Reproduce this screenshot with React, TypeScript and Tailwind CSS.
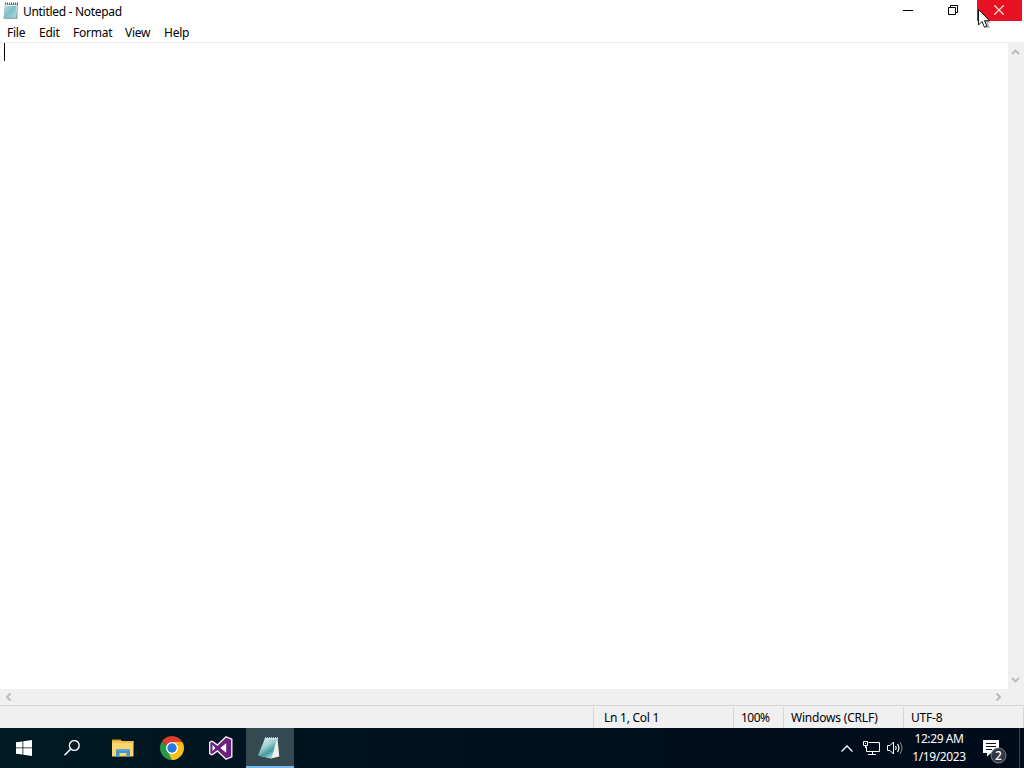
import clsx from 'clsx';

interface IconProps {
  className?: string;
}

const MENUS = [
  { label: 'File', width: 'w-[32px]' },
  { label: 'Edit', width: 'w-[34px]' },
  { label: 'Format', width: 'w-[52px]' },
  { label: 'View', width: 'w-[39px]' },
  { label: 'Help', width: 'w-[40px]' },
];

const STATUS = [
  { label: 'Ln 1, Col 1', className: 'w-[140px] pl-[10px] tracking-[-0.25px]' },
  { label: '100%', className: 'w-[50px] pl-[7px] tracking-[-0.55px]' },
  { label: 'Windows (CRLF)', className: 'w-[120px] pl-[7px] tracking-[-0.2px]' },
  { label: 'UTF-8', className: 'w-[120px] pl-[7px] tracking-[-0.2px]' },
];

const Chevron = ({ className }: IconProps) => (
  <svg viewBox="0 0 9 6" className={clsx('w-[9px] h-[6px]', className)}>
    <path d="M1 5L4.500 1.500L8 5" fill="none" stroke="currentColor" strokeWidth="1.800" />
  </svg>
);

const NotepadSmall = () => (
  <svg viewBox="0 0 16 18" className="w-[16px] h-[18px]">
    <defs>
      <linearGradient id="pageSmall" x1="0" y1="0" x2="1" y2="1">
        <stop offset="0" stopColor="#c5e6e8" />
        <stop offset="0.5" stopColor="#80c0c4" />
        <stop offset="1" stopColor="#a9dcdd" />
      </linearGradient>
    </defs>
    <path d="M2 2L14.800 2L14.300 16.800L0.600 16.800Z" fill="#6d9598" />
    <path d="M2 2.500L13.500 2.500L12.300 15.800L0.600 15.800Z" fill="url(#pageSmall)" />
    <path d="M13.700 3L12.800 15.500" stroke="#e1eeee" strokeWidth="0.800" />
    <path d="M2 1.500H15" stroke="#4c5b5c" strokeWidth="2" strokeDasharray="1 1" />
    <path d="M2 3.500H14" stroke="#e8f2f2" strokeWidth="1" />
  </svg>
);

const WindowsLogo = () => (
  <svg viewBox="0 0 16 16" className="w-[16px] h-[16px]" fill="#fff">
    <path d="M0 2.300L6.500 1.400V7.500H0ZM7.300 1.300L16 0V7.500H7.300ZM0 8.300H6.500V14.600L0 13.700ZM7.300 8.300H16V16L7.300 14.700Z" />
  </svg>
);

const SearchIcon = () => (
  <svg viewBox="0 0 16 16" className="w-[16px] h-[16px]" fill="none" stroke="#fff">
    <circle cx="10.300" cy="5.500" r="4.900" strokeWidth="1.400" />
    <path d="M6.800 9L0.500 15.300" strokeWidth="1.500" />
  </svg>
);

const FolderIcon = () => (
  <svg viewBox="0 0 22 19" className="w-[22px] h-[19px]">
    <path d="M0 1H8L10 2H21.500V17.500H0Z" fill="#fbd570" />
    <path d="M0 0.500H8.500L9.500 2.200H0Z" fill="#d99d24" />
    <path d="M1 3H9L10 2H21.500V4H1Z" fill="#f2bd45" />
    <path d="M4 18V11.500Q4 10 5.500 10H16.500Q18 10 18 11.500V18H14.500V14H7.500V18Z" fill="#4596cd" />
    <path d="M5 10.300H17L16 12H6Z" fill="#61a5d2" />
  </svg>
);

const ChromeIcon = () => (
  <svg viewBox="0 0 24 24" className="w-[24px] h-[24px]">
    <path d="M12 12L1.610 6A12 12 0 0 1 22.390 6Z" fill="#e33b2e" />
    <path d="M12 12L22.390 6A12 12 0 0 1 12 24Z" fill="#fbc116" />
    <path d="M12 12V24A12 12 0 0 1 1.610 6Z" fill="#279847" />
    <path d="M17.200 15L12 24L9 18L12 12L22.390 6H12L18 9Z" fill="#fbc116" />
    <path d="M1.610 6L6.800 15L9 12Z" fill="#279847" />
    <circle cx="12" cy="12" r="6" fill="#fff" />
    <circle cx="12" cy="12" r="4.700" fill="#2b76e5" />
  </svg>
);

const VisualStudioIcon = () => (
  <svg viewBox="0 0 24 24" className="w-[24px] h-[24px]">
    <path
      d="M17 0.800L22.800 3.200V20.800L17 23.200L8.500 14.900L3.200 18.800L0.700 17.600V6.400L3.200 5.200L8.500 9.100Z"
      fill="#68217a"
      stroke="#f3edf5"
      strokeWidth="1.400"
      strokeLinejoin="round"
    />
    <path d="M3.500 8.800L6.300 12L3.500 15.200ZM11.300 12L17.200 7.300V16.700Z" fill="#fff" />
  </svg>
);

const NotepadIcon = () => (
  <svg viewBox="0 0 24 24" className="w-[24px] h-[24px]">
    <defs>
      <linearGradient id="pageLarge" x1="0" y1="0" x2="0.6" y2="1">
        <stop offset="0" stopColor="#dff2f1" />
        <stop offset="0.45" stopColor="#a5d2d3" />
        <stop offset="0.75" stopColor="#419aa0" />
        <stop offset="1" stopColor="#a2d6d5" />
      </linearGradient>
    </defs>
    <path d="M8 2L20.500 2L22.300 20.500L14 22.500L3 20Z" fill="#d1d9d9" />
    <path d="M20 3L22 20.200L14.500 22Z" fill="#efeeea" />
    <path d="M8 2.500L19.800 2.800L14.500 22.500L1 19.500Z" fill="url(#pageLarge)" />
    <path d="M8 2.300H21" stroke="#e0e6e6" strokeWidth="2" strokeDasharray="1 1" />
  </svg>
);

const NetworkIcon = () => (
  <svg viewBox="0 0 17 15" className="w-[17px] h-[15px]" fill="none" stroke="#fff">
    <path d="M5.500 1.500H16.500V10.500H3.500V5.500M9.500 10.500V13.500M5 13.500H13" />
    <path d="M0.500 0.500H4.500V4.500H0.500ZM2 2.500H3M2.500 4.500V7" />
  </svg>
);

const VolumeIcon = () => (
  <svg viewBox="0 0 17 14" className="w-[17px] h-[14px]" fill="none" stroke="#fff">
    <path d="M0.500 4.500H3L6.500 1V13L3 9.500H0.500Z" />
    <path d="M8.500 5Q10 7 8.500 9M10.500 3Q13.300 7 10.500 11" strokeWidth="1.200" />
    <path d="M12.800 1.300Q17.300 7 12.800 12.700" stroke="#8b929a" />
  </svg>
);

const ActionCenter = () => (
  <div className="relative w-[24px] h-[24px] mt-[7px]">
    <svg viewBox="0 0 24 24" className="w-full h-full">
      <path d="M0 0H16V13H8L4 16.500V13H0Z" fill="#fff" />
      <path d="M3 3.500H13M3 6.500H13M3 9.500H9" stroke="#08121d" />
      <circle cx="15.500" cy="15.500" r="7.500" fill="#313944" stroke="#7b828a" />
    </svg>
    <span className="absolute left-[8px] top-[8px] w-[15px] text-center text-[12px] font-medium leading-[15px] text-white">
      2
    </span>
  </div>
);

const TitleBar = () => (
  <header className="h-[23px] shrink-0 flex items-start">
    <div className="w-[23px] pl-[3px] pt-[2px]">
      <NotepadSmall />
    </div>
    <h1 className="flex-1 pt-[3px] leading-[18px] tracking-[-0.3px]">Untitled - Notepad</h1>
    <div className="w-[45px] h-[21px] pr-[2px] flex items-center justify-center">
      <div className="w-[10px] h-px bg-black" />
    </div>
    <div className="w-[46px] h-[20px] pr-[2px] flex items-center justify-center">
      <svg viewBox="0 0 10 10" className="w-[10px] h-[10px]" fill="none" stroke="#000">
        <path d="M0.500 2.500H7.500V9.500H0.500ZM2.500 2V0.500H9.500V7.500H8" />
      </svg>
    </div>
    <div className="w-[45px] h-[21px] pr-px pb-px mr-[2px] flex items-center justify-center bg-[#e81123]">
      <svg viewBox="0 0 10 10" className="w-[10px] h-[10px]" fill="none" stroke="#ffd8d2">
        <path d="M0 0L10 10M10 0L0 10" strokeWidth="1.300" />
      </svg>
    </div>
  </header>
);

const Taskbar = () => (
  <footer className="h-[40px] shrink-0 flex bg-linear-to-r from-[#001a23] via-[#00101e] to-[#000b1a] text-white">
    <div className="w-[48px] flex items-center justify-center">
      <WindowsLogo />
    </div>
    <div className="w-[48px] flex items-center justify-center">
      <SearchIcon />
    </div>
    <div className="w-[53px] flex items-center justify-center">
      <FolderIcon />
    </div>
    <div className="w-[46px] flex items-center justify-center">
      <ChromeIcon />
    </div>
    <div className="w-[51px] flex items-center justify-center">
      <VisualStudioIcon />
    </div>
    <div className="w-[48px] pr-[2px] pt-[2px] flex items-center justify-center bg-[#344950] border-b-2 border-[#76b9ed]">
      <NotepadIcon />
    </div>
    <div className="flex-1" />
    {/* tray */}
    <div className="flex items-center">
      <svg viewBox="0 0 12 7" className="w-[12px] h-[7px] mr-[10px]" fill="none" stroke="#fff">
        <path d="M0.500 6.500L6 1L11.500 6.500" strokeWidth="1.300" />
      </svg>
      <NetworkIcon />
      <div className="ml-[7px]">
        <VolumeIcon />
      </div>
      <div className="w-[70px] mr-[9px] h-[36px] text-center leading-[18px]">
        <p className="tracking-[-0.4px]">12:29 AM</p>
        <p className="tracking-[-0.4px]">1/19/2023</p>
      </div>
      <ActionCenter />
      <div className="w-px h-[40px] ml-[12px] mr-[4px] bg-[#3a4550]" />
    </div>
  </footer>
);

const App = () => (
  <main className="relative w-[1024px] h-[768px] flex flex-col overflow-hidden bg-white font-['Noto_Sans',sans-serif] text-[12px] text-black">
    <TitleBar />
    <nav className="h-[19px] shrink-0 flex pl-[7px]">
      {MENUS.map(({ label, width }) => (
        <span key={label} className={clsx('leading-[20px] tracking-[-0.25px]', width)}>
          {label}
        </span>
      ))}
    </nav>
    <section className="h-[647px] shrink-0 flex border-t border-[#ececec]">
      <div className="flex-1 pl-[4px]">
        <div className="w-px h-[18px] bg-black" />
      </div>
      <div className="w-[16px] py-[6px] pr-[2px] flex flex-col items-center justify-between bg-[#f0f0f0] text-[#b8b8b8]">
        <Chevron />
        <Chevron className="rotate-180" />
      </div>
    </section>
    <div className="h-[16px] shrink-0 flex items-center justify-between pl-[4px] pr-[21px] bg-[#f0f0f0] text-[#b8b8b8]">
      <Chevron className="-rotate-90" />
      <Chevron className="rotate-90" />
    </div>
    <section className="h-[23px] shrink-0 flex justify-end border-t border-[#d7d7d7] bg-[#f0f0f0]">
      {STATUS.map(({ label, className }) => (
        <div key={label} className={clsx('mt-px border-l border-[#d5d5d5] leading-[22px]', className)}>
          {label}
        </div>
      ))}
      <div className="w-px mt-px bg-[#d5d5d5]" />
    </section>
    <Taskbar />
    <svg viewBox="0 0 14 20" className="absolute left-[978px] top-[9px] w-[14px] h-[20px]">
      <path d="M2.500 3L13 14L10 14L12 18.500L9 19.500Z" fill="#000" opacity="0.25" />
      <path d="M0.500 0.500V16L4 12.500L6.500 18.300L9 17.200L6.500 11.700H11.500Z" fill="#fff" stroke="#111" />
    </svg>
  </main>
);

export default App;
